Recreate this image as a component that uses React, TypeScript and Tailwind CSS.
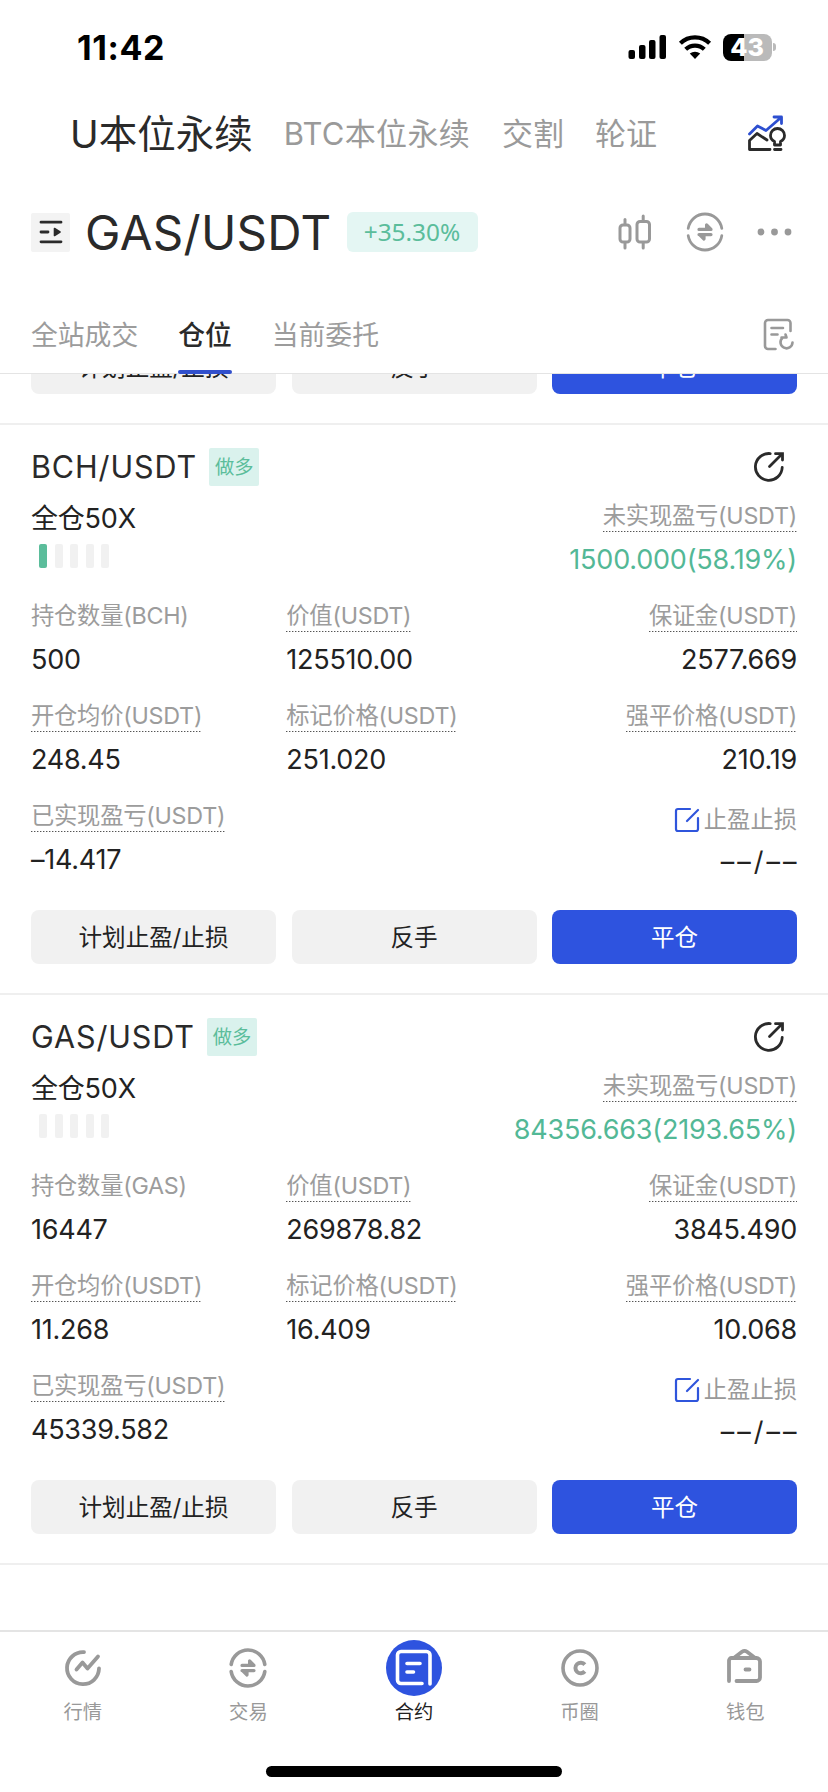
import React from 'react';

interface Metric {
  label: string;
  value: string;
  plain?: boolean;
}

interface Position {
  symbol: string;
  leverage: string;
  risk: number;
  pnl: string;
  rows: Metric[][];
  realized: string;
}

const positions: Position[] = [
  {
    symbol: 'BCH/USDT',
    leverage: '全仓50X',
    risk: 1,
    pnl: '1500.000(58.19%)',
    rows: [
      [
        { label: '持仓数量(BCH)', value: '500', plain: true },
        { label: '价值(USDT)', value: '125510.00' },
        { label: '保证金(USDT)', value: '2577.669' },
      ],
      [
        { label: '开仓均价(USDT)', value: '248.45' },
        { label: '标记价格(USDT)', value: '251.020' },
        { label: '强平价格(USDT)', value: '210.19' },
      ],
    ],
    realized: '–14.417',
  },
  {
    symbol: 'GAS/USDT',
    leverage: '全仓50X',
    risk: 0,
    pnl: '84356.663(2193.65%)',
    rows: [
      [
        { label: '持仓数量(GAS)', value: '16447', plain: true },
        { label: '价值(USDT)', value: '269878.82' },
        { label: '保证金(USDT)', value: '3845.490' },
      ],
      [
        { label: '开仓均价(USDT)', value: '11.268' },
        { label: '标记价格(USDT)', value: '16.409' },
        { label: '强平价格(USDT)', value: '10.068' },
      ],
    ],
    realized: '45339.582',
  },
];

const StatusBar: React.FC = () => (
  <div className="flex h-[94px] items-center justify-between pl-[77px] pr-[52px]">
    <span className="text-[34px] font-bold tracking-[0.6px] text-black">11:42</span>
    <div className="flex items-center">
      <svg className="h-[26px] w-[39px]" viewBox="0 0 39 26">
        <rect x="0.5" y="16" width="6.5" height="9" rx="2" />
        <rect x="11" y="11" width="6.5" height="14" rx="2" />
        <rect x="21" y="6" width="6.5" height="19" rx="2" />
        <rect x="31.5" y="1" width="6.5" height="24" rx="2" />
      </svg>
      <svg className="ml-[11px] h-[26px] w-[34px]" viewBox="0 0 34 26" fill="none" stroke="#000" strokeWidth="4.2">
        <path d="M2.4 9.2A21 21 0 0 1 31.6 9.2" />
        <path d="M7.7 15.3A13.5 13.5 0 0 1 26.3 15.3" />
        <path d="M17 25L11.8 19.6A8 8 0 0 1 22.2 19.6Z" fill="#000" stroke="none" />
      </svg>
      <div className="ml-[11px] flex items-center">
        <div className="flex h-[27px] w-[49px] items-center justify-center rounded-[8px] bg-[linear-gradient(to_right,#000_43%,#bababa_43%)] text-[25px] leading-none font-extrabold text-white">
          43
        </div>
        <div className="ml-[1.5px] h-[8px] w-[3px] rounded-r-full bg-[#bababa]" />
      </div>
    </div>
  </div>
);

const InsightIcon = () => (
  <svg className="h-[38px] w-[40px]" viewBox="0 0 40 38" fill="none" strokeWidth="2.8" strokeLinecap="round" strokeLinejoin="round">
    <path stroke="#2d4fd0" d="M2.5 20L10.5 12L19 16.5L34 3.5M27 3H34.500V9.500" />
    <path stroke="#2a2a2a" d="M20 26L10 19.500L2.500 26.500V35.500H23" />
    <path stroke="#2a2a2a" d="M27.500 31V27.500C24.500 26 23.500 24 23.500 21.500A7 7 0 0 1 37.500 21.500C37.500 24 36.500 26 33.500 27.500V31ZM27.500 35.500H34" />
  </svg>
);

const CandleIcon = () => (
  <svg className="h-[37px] w-[36px]" viewBox="0 0 36 37" fill="none" stroke="#999" strokeWidth="3" strokeLinecap="round">
    <rect x="3" y="11" width="10" height="17" rx="3" />
    <path d="M8 5.5V10M8 29.5V34" />
    <rect x="20" y="7.5" width="12.5" height="20.5" rx="3" />
    <path d="M26.2 2V7M26.2 29V34" />
  </svg>
);

const SwapIcon: React.FC<{ heavy?: boolean }> = ({ heavy }) => (
  <svg className="h-[40px] w-[40px]" viewBox="0 0 40 40" fill="none" stroke="#999" strokeWidth={heavy ? 3.6 : 2.8} strokeLinecap="round" strokeLinejoin="round">
    <path d="M3.2 16.4A17 17 0 0 1 36.8 16.4M3.2 23.6A17 17 0 0 0 36.8 23.6" />
    <path d="M14 17.4H26L21.6 13V16M26 22.6H14M14.5 22.6L19 27V24" strokeWidth="3.2" />
  </svg>
);

const RecordIcon = () => (
  <svg className="h-[34px] w-[32px]" viewBox="0 0 32 34" fill="none" stroke="#999" strokeWidth="2.6" strokeLinecap="round" strokeLinejoin="round">
    <path d="M27.5 13V5A3 3 0 0 0 24.5 2H5A3 3 0 0 0 2 5V28A3 3 0 0 0 5 31H12.5" />
    <path d="M8.5 10H20M8.5 16.5H14.5" />
    <path d="M19.5 19.8A6 6 0 1 0 29.5 24.5M18.5 19.5H23.5L22.5 16.5" />
  </svg>
);

const ShareIcon = () => (
  <svg className="h-[34px] w-[34px]" viewBox="0 0 34 34" fill="none" stroke="#2a2a2a" strokeWidth="2.8" strokeLinecap="round">
    <path d="M18.2 3.6A13.4 13.4 0 1 0 30.2 17.5" />
    <path d="M17.5 16.5L29.5 4.5" />
    <path d="M23.5 3.7H30.5V10" />
  </svg>
);

const EditIcon = () => (
  <svg className="h-[26px] w-[26px]" viewBox="0 0 26 26" fill="none" stroke="#2f55dc" strokeWidth="2.2" strokeLinecap="round" strokeLinejoin="round">
    <path d="M16 2H4A2 2 0 0 0 2 4V22A2 2 0 0 0 4 24H22A2 2 0 0 0 24 22V11" />
    <path d="M13 14L24 3" />
  </svg>
);

const Header: React.FC = () => (
  <>
    <div className="flex h-[78px] items-center pt-[3px] pl-[70px] pr-[41px] text-[31px] text-[#9a9a9a]">
      <span className="text-[38.5px] text-[#2a2a2a]">U本位永续</span>
      <span className="ml-[31px] tracking-[0.3px]">BTC本位永续</span>
      <span className="ml-[32px]">交割</span>
      <span className="ml-[31px]">轮证</span>
      <div className="ml-auto pb-[4px]">
        <InsightIcon />
      </div>
    </div>
    <div className="flex h-[120px] items-center pl-[31px] pr-[35px]">
      <div className="flex h-[39px] w-[39px] items-center justify-center rounded-xs bg-[#f3f3f3]">
        <svg className="h-[26px] w-[26px]" viewBox="0 0 26 26" fill="none" stroke="#2a2a2a" strokeWidth="2.8" strokeLinecap="round">
          <path d="M3 3.2H23M3 13H10M3 22.8H23" />
          <path d="M16.5 9.5L22 13L16.5 16.5Z" fill="#2a2a2a" strokeWidth="1.6" strokeLinejoin="round" />
        </svg>
      </div>
      <span className="ml-[15px] pt-px text-[47.5px] tracking-[0.3px] text-[#2a2a2a]">GAS/USDT</span>
      <span className="ml-[15px] flex h-[40px] w-[131px] items-center justify-center rounded-md bg-[#e4f6f3] font-['Noto_Sans'] text-[24.4px] text-[#5bbd9b]">
        +35.30%
      </span>
      <div className="ml-auto flex items-center">
        <CandleIcon />
        <div className="ml-[32px]">
          <SwapIcon />
        </div>
        <svg className="ml-[32px] h-[8px] w-[36px]" viewBox="0 0 36 8" fill="#999">
          <circle cx="4" cy="4" r="3.4" />
          <circle cx="17.5" cy="4" r="3.4" />
          <circle cx="31" cy="4" r="3.4" />
        </svg>
      </div>
    </div>
    <div className="flex h-[82px] items-stretch border-b border-[#e4e4e4] pl-[31px] pr-[33px] text-[26.8px] text-[#9c9c9c]">
      <span className="leading-[86px]">全站成交</span>
      <span className="relative ml-[40px] leading-[86px] font-medium text-[#2a2a2a]">
        仓位
        <span className="absolute -bottom-px left-0 h-[4px] w-full rounded-full bg-[#3250cc]" />
      </span>
      <span className="ml-[40px] leading-[86px]">当前委托</span>
      <div className="ml-auto flex items-center pt-[4px]">
        <RecordIcon />
      </div>
    </div>
  </>
);

const Actions: React.FC = () => (
  <div className="grid h-[54px] shrink-0 grid-cols-3 gap-[15.5px] text-[23.6px] leading-[54px] text-[#222]">
    <button className="h-[54px] rounded-lg bg-[#f1f1f1] pt-px leading-[53px]">计划止盈/止损</button>
    <button className="h-[54px] rounded-lg bg-[#f1f1f1] pt-px leading-[53px]">反手</button>
    <button className="h-[54px] rounded-lg bg-[#2e53df] pt-px leading-[53px] text-white">平仓</button>
  </div>
);

const Label: React.FC<{ text: string; plain?: boolean }> = ({ text, plain }) => (
  <div className="flex h-[31px] w-fit flex-col text-[23.3px] leading-[30px] tracking-[-0.25px] text-[#9c9c9c]">
    <span className="h-[30px]">{text}</span>
    {!plain && <div className="h-px w-full bg-[repeating-linear-gradient(to_right,#555_0_1px,#bbb_1px_2px,#fff_2px_3px)]" />}
  </div>
);

const Value: React.FC<{ children: React.ReactNode }> = ({ children }) => (
  <div className="mt-[11px] text-[27px] leading-[34px] tracking-[-0.25px] text-[#222]">{children}</div>
);

const PositionCard: React.FC<{ position: Position }> = ({ position }) => (
  <section className="h-[570px] shrink-0 border-b-2 border-[#efefef] px-[31px] pt-[23px]">
    <div className="flex h-[38px] items-center">
      <span className="text-[30.5px] tracking-[0.9px] text-[#2a2a2a]">{position.symbol}</span>
      <span className="ml-[12px] flex h-[38px] w-[50px] items-center justify-center rounded-xs bg-[#daf2ed] pt-px text-[19.3px] text-[#5bbd9b]">
        做多
      </span>
      <div className="ml-auto pr-[11px]">
        <ShareIcon />
      </div>
    </div>

    <div className="mt-[15px] flex h-[100px] justify-between">
      <div>
        <div className="pt-px text-[27px] leading-[34px] tracking-[-0.2px] text-[#222]">{position.leverage}</div>
        <div className="mt-[8px] ml-[8px] flex gap-[7.5px]">
          {[0, 1, 2, 3, 4].map((i) => (
            <div key={i} className={`h-[24px] w-[8px] rounded-xs ${i < position.risk ? 'bg-[#5bbd9b]' : 'bg-[#f1f1f1]'}`} />
          ))}
        </div>
      </div>
      <div className="flex flex-col items-end">
        <Label text="未实现盈亏(USDT)" />
        <div className="mt-[11px] text-[27px] leading-[34px] tracking-[-0.2px] text-[#53b896]">{position.pnl}</div>
      </div>
    </div>

    {position.rows.map((row, r) => (
      <div key={r} className="grid h-[100px] grid-cols-3">
        {row.map((m, i) => (
          <div key={m.label} className={`flex flex-col ${i === 2 ? 'items-end' : 'items-start'}`}>
            <Label text={m.label} plain={m.plain} />
            <Value>{m.value}</Value>
          </div>
        ))}
      </div>
    ))}

    <div className="flex h-[109px] justify-between">
      <div>
        <Label text="已实现盈亏(USDT)" />
        <Value>{position.realized}</Value>
      </div>
      <div className="flex flex-col items-end pt-[4px]">
        <div className="flex h-[30px] items-center gap-[4px] text-[23.3px] leading-[30px] text-[#999]">
          <EditIcon />
          止盈止损
        </div>
        <div className="mt-[10px] -mr-[2.5px] text-[27px] leading-[34px] tracking-[3px] text-[#222]">––/––</div>
      </div>
    </div>
    <Actions />
  </section>
);

const TrendIcon = () => (
  <svg className="h-[40px] w-[40px]" viewBox="0 0 40 40" fill="none" stroke="#999" strokeWidth="3.8" strokeLinecap="round" strokeLinejoin="round">
    <path d="M21 4.2A16 16 0 1 0 36 20.5" />
    <path d="M13.5 21.5L19.5 14.5L24.5 20.5L35 8.5" />
  </svg>
);

const ContractIcon = () => (
  <div className="flex h-[56px] w-[56px] items-center justify-center rounded-full bg-[#2e53df]">
    <svg className="h-[38px] w-[38px]" viewBox="0 0 38 38" fill="none" stroke="#fff" strokeWidth="3.6" strokeLinecap="round" strokeLinejoin="round">
      <path d="M35 35V6A3.5 3.5 0 0 0 31.5 2.5H6A3.5 3.5 0 0 0 2.5 6V31A3.5 3.5 0 0 0 6 34.5H27" />
      <path d="M12 14.5H25M12 23H18.5" />
    </svg>
  </div>
);

const CoinIcon = () => (
  <svg className="h-[40px] w-[40px]" viewBox="0 0 40 40" fill="none" stroke="#999" strokeWidth="3.6">
    <circle cx="20" cy="20" r="17" />
    <path d="M24.8 16.6A5.3 5.3 0 1 0 24.8 23.4" strokeWidth="4" />
  </svg>
);

const WalletIcon = () => (
  <svg className="h-[40px] w-[40px]" viewBox="0 0 40 40" fill="none" stroke="#999" strokeWidth="3.8" strokeLinecap="round" strokeLinejoin="round">
    <path d="M4 33V12.5A2.5 2.5 0 0 1 6.5 10H31.5A3.5 3.5 0 0 1 35 13.5V29.5A3.5 3.5 0 0 1 31.5 33H11.5" />
    <path d="M9.5 9.5L17 3.8Q19.5 2 22 3.8L29.5 9.5M20.5 21.5H24.5" />
  </svg>
);

const navItems = [
  { name: '行情', icon: <TrendIcon /> },
  { name: '交易', icon: <SwapIcon heavy /> },
  { name: '合约', icon: <ContractIcon />, active: true },
  { name: '币圈', icon: <CoinIcon /> },
  { name: '钱包', icon: <WalletIcon /> },
];

const App: React.FC = () => (
  <div className="flex h-[1792px] w-[828px] flex-col overflow-hidden bg-white font-['Inter','Noto_Sans_CJK_SC',sans-serif]">
    <StatusBar />
    <Header />

    {/* Scrolled list, the first card is mostly above the fold */}
    <main className="flex h-[1256px] flex-col overflow-hidden">
      <div className="-mt-[34px] h-[85px] shrink-0 border-b-2 border-[#efefef] px-[31px]">
        <Actions />
      </div>
      {positions.map((p) => (
        <PositionCard key={p.symbol} position={p} />
      ))}
    </main>

    <nav className="grid h-[136px] grid-cols-5 border-t-2 border-[#e4e4e4]">
      {navItems.map((item) => (
        <div key={item.name} className={`flex flex-col items-center text-[19.3px] ${item.active ? 'text-[#222]' : 'text-[#999]'}`}>
          <div className="mt-[8px] flex h-[56px] items-center">{item.icon}</div>
          <span className="mt-[2px] leading-[28px]">{item.name}</span>
        </div>
      ))}
    </nav>
    <div className="mx-auto mb-[15px] h-[11px] w-[296px] rounded-full bg-black" />
  </div>
);

export default App;
